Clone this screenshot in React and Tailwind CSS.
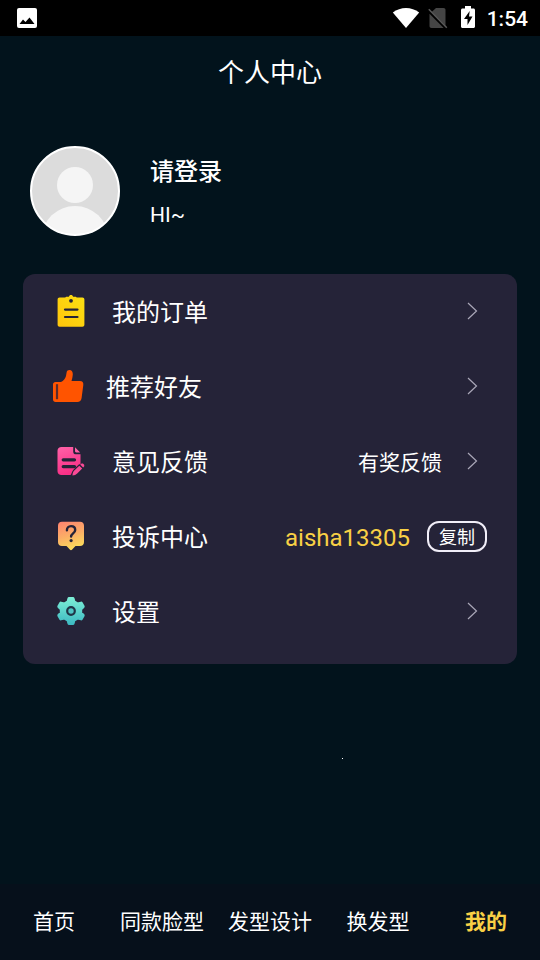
import React from "react";

function ClipboardIcon() {
  return (
    <svg className="mb-0.5 h-8 w-8" viewBox="0 0 32 32" aria-hidden="true">
      <defs>
        <linearGradient id="gold" x1="0" y1="1" x2="1" y2="0">
          <stop offset="0" stopColor="#ffc50c" />
          <stop offset="1" stopColor="#fbe012" />
        </linearGradient>
      </defs>
      <path
        fill="url(#gold)"
        d="M4.600 2.600H10c.4 0 .6-.9 1.300-.9h2.500C14.400.4 15.200 0 16 0s1.600.4 2.200 1.700h2.500c.7 0 .9.900 1.300.9h5.400c1.200 0 2 .8 2 2v25.200c0 1.200-.8 2-2 2H4.600c-1.200 0-2-.8-2-2V4.600c0-1.200.8-2 2-2Z"
      />
      <circle cx="16" cy="5.800" r="1.900" fill="#252338" />
      <path d="M10 14.600h12.500M10 22h12.500" stroke="#252338" strokeWidth="2.200" strokeLinecap="round" />
    </svg>
  );
}

function ThumbIcon() {
  return (
    <svg className="mb-0.5 h-8 w-8" viewBox="0 0 32 32" aria-hidden="true">
      <path
        fill="#ff5400"
        d="M2.500 12H8c2.500-1 4.400-3.500 5-6l.6-3.600C13.900.8 15 0 16.400 0c2.300 0 3.600 1.900 3.400 4.400-.1 2.200-.6 4.400-1.300 6.600h8.500c2.400 0 3.600 1.600 3.300 4l-1.700 13c-.4 2.500-1.800 4-4.300 4H2.500C1 32 0 31 0 29.500v-15C0 13 1 12 2.500 12Z"
      />
      <path d="M4 14.200v15" stroke="#5b2b2c" strokeWidth="2.200" />
    </svg>
  );
}

function NoteIcon() {
  return (
    <svg className="mb-0.5 h-8 w-8" viewBox="0 0 32 32" aria-hidden="true">
      <defs>
        <linearGradient id="pink" x1="0" y1="0" x2="0.300" y2="1">
          <stop offset="0" stopColor="#ff62a8" />
          <stop offset="1" stopColor="#fa2f86" />
        </linearGradient>
      </defs>
      <path
        fill="url(#pink)"
        d="M6.500 2h11.700v4.400c0 1.900 1 2.900 2.900 2.900H25.500v10L17 28l-1.500 2H6.500c-2.300 0-4-1.500-4-3.800V5.800C2.500 3.500 4.200 2 6.500 2Z"
      />
      <path fill="#ff62a8" d="M20 2.300 25.200 7.400h-3.800c-1 0-1.400-.5-1.400-1.400Z" />
      <path d="M8.200 14.800h11.300M8.200 21.600h11.300" stroke="#252338" strokeWidth="3.200" strokeLinecap="round" />
      <path
        fill="#fa4a96"
        stroke="#252338"
        strokeWidth="2.500"
        paintOrder="stroke"
        d="M17.500 30.500c0-2 .5-3.600 1.800-4.900l5-4.900 2.900 2.900-5 4.900c-1.300 1.300-2.700 2-4.700 2Z"
      />
      <path fill="#fa4a96" d="m25.300 19.700.7-.7c1.700-1.500 4.300 1 2.900 2.800l-.7.800Z" />
    </svg>
  );
}

function QuestionIcon() {
  return (
    <svg className="mb-0.5 h-8 w-8" viewBox="0 0 32 32" aria-hidden="true">
      <defs>
        <linearGradient id="peach" x1="0" y1="0" x2="0.300" y2="1">
          <stop offset="0" stopColor="#ff8270" />
          <stop offset="0.550" stopColor="#fbad66" />
          <stop offset="1" stopColor="#fbd85c" />
        </linearGradient>
      </defs>
      <path
        fill="url(#peach)"
        d="M7 1.700h18c2.500 0 4 1.500 4 4V22c0 2.500-1.500 4-4 4h-4.500l-3.300 3.600c-.8.800-1.600.8-2.400 0L11.500 26H7c-2.500 0-4-1.500-4-4V5.700c0-2.500 1.500-4 4-4Z"
      />
      <path
        d="M11.900 10.300c0-2.500 1.600-4.200 4.100-4.200s4.200 1.600 4.200 3.900c0 3.300-4.100 3.500-4.100 6.600"
        fill="none"
        stroke="#252338"
        strokeWidth="2.400"
        strokeLinecap="round"
      />
      <circle cx="16.100" cy="20.600" r="1.600" fill="#252338" />
    </svg>
  );
}

function GearIcon() {
  return (
    <svg className="mb-0.5 h-8 w-8" viewBox="0 0 32 32" aria-hidden="true">
      <defs>
        <linearGradient id="teal" gradientUnits="userSpaceOnUse" x1="0" y1="2" x2="0" y2="30">
          <stop offset="0" stopColor="#7eefd6" />
          <stop offset="1" stopColor="#3cb9c2" />
        </linearGradient>
      </defs>
      <path
        fill="url(#teal)"
        stroke="url(#teal)"
        strokeWidth="3"
        strokeLinejoin="round"
        d="M14 3.500h4l1 3.400 3.600 2.100 3.600-.9 2 3.500-2.500 2.500v3.800l2.500 2.500-2 3.500-3.600-.9-3.600 2.100-1 3.400h-4l-1-3.400L9.400 23l-3.600.9-2-3.500 2.500-2.500v-3.800l-2.500-2.500 2-3.500 3.600.9L13 6.900Z"
      />
      <circle cx="16" cy="16" r="3.800" fill="#4fc4c4" stroke="#203547" strokeWidth="2.200" />
    </svg>
  );
}

function Chevron() {
  return (
    <svg className="mr-[9px] mb-0.5 h-5 w-3 shrink-0" viewBox="0 0 12 20" fill="none" aria-hidden="true">
      <path d="m2 2 8.500 8L2 18" stroke="#aaa7b8" strokeWidth="1.200" />
    </svg>
  );
}

const items = [
  { label: "我的订单", Icon: ClipboardIcon },
  { label: "推荐好友", Icon: ThumbIcon, wide: true },
  { label: "意见反馈", Icon: NoteIcon, note: "有奖反馈" },
  { label: "投诉中心", Icon: QuestionIcon, account: "aisha13305" },
  { label: "设置", Icon: GearIcon },
];

const tabs = ["首页", "同款脸型", "发型设计", "换发型", "我的"];

function StatusBar() {
  return (
    <div className="flex h-9 items-center justify-between bg-black pr-3 pl-[17px] text-white">
      <svg className="h-5 w-5" viewBox="0 0 20 20" aria-hidden="true">
        <rect width="20" height="20" rx="2" fill="#fff" />
        <path d="m2.500 16 3.500-4.500 2.500 2.500 4-4.500 5 6.500Z" fill="#000" />
      </svg>
      <div className="flex items-center">
        <svg className="h-5 w-7" viewBox="0 0 28 20" aria-hidden="true">
          <path d="M.8 4.500C8.500-1.500 19.500-1.500 27.200 4.500L14 20Z" fill="#fff" />
        </svg>
        <svg className="ml-2 h-[22px] w-5" viewBox="0 0 20 22" aria-hidden="true">
          <path d="M8 1h7.500c1.200 0 2 .8 2 2v16c0 1.200-.8 2-2 2h-12c-1.200 0-2-.8-2-2V7Z" fill="#454545" />
          <path d="m0 3.200 18 18" stroke="#000" strokeWidth="3" />
          <path d="m.8 2.200 18 18.500" stroke="#5a5a5a" strokeWidth="1.500" />
        </svg>
        <svg className="mb-0.5 ml-3 h-[22px] w-4" viewBox="0 0 16 22" aria-hidden="true">
          <path d="M5 0h6v2.500h2.500c.8 0 1.500.7 1.500 1.500v16.500c0 .8-.7 1.500-1.500 1.500h-11c-.8 0-1.500-.7-1.500-1.500V4c0-.8.700-1.500 1.500-1.500H5Z" fill="#fff" />
          <path d="M9.700 5 4 13h3.500v6L12.500 10.500H9Z" fill="#000" />
        </svg>
        <span className="ml-[11px] pt-0.5 text-[21px] leading-6 font-medium">1:54</span>
      </div>
    </div>
  );
}

function MenuRow({ label, Icon, wide, note, account }) {
  const lead = (
    <span className={wide ? "flex flex-1 items-center gap-[21px] pl-[30px]" : "flex flex-1 items-center gap-[25px] pl-8"}>
      <Icon />
      <span className="pt-0.5 text-2xl">{label}</span>
    </span>
  );
  if (account) {
    return (
      <li className="flex h-[75px] items-center pr-[30px]">
        {lead}
        <span className="pt-0.5 text-2xl text-[#f8d045]">{account}</span>
        <button
          type="button"
          className="ml-[17px] h-[31px] w-[60px] rounded-xl border-2 border-[#f1eef8] pt-0.5 text-lg leading-6"
        >
          复制
        </button>
      </li>
    );
  }
  return (
    <li>
      <button type="button" className="flex h-[75px] w-full items-center pr-[30px] text-left">
        {lead}
        {note && <span className="mr-6 pt-1 text-[21px]">{note}</span>}
        <Chevron />
      </button>
    </li>
  );
}

export default function App() {
  return (
    <div className="relative flex min-h-screen flex-col bg-[#02131c] font-[Roboto,'Noto_Sans_CJK_SC',sans-serif] text-white">
      <StatusBar />
      <header className="flex h-[74px] items-center justify-center">
        <h1 className="text-[26px] leading-8">个人中心</h1>
      </header>

      <main className="flex-1">
        <section className="flex items-center gap-[30px] px-[30px] pt-9">
          <svg className="h-[90px] w-[90px]" viewBox="0 0 90 90" role="img" aria-label="头像">
            <defs>
              <clipPath id="face">
                <circle cx="45" cy="45" r="44" />
              </clipPath>
            </defs>
            <circle cx="45" cy="45" r="44" fill="#dcdcdc" />
            <g clipPath="url(#face)" fill="#f5f5f5">
              <circle cx="45" cy="39" r="18" />
              <ellipse cx="45" cy="92" rx="33" ry="32" />
            </g>
            <circle cx="45" cy="45" r="44" fill="none" stroke="#fff" strokeWidth="2" />
          </svg>
          <div className="pt-[5px]">
            <p className="text-2xl leading-9 font-medium">请登录</p>
            <p className="mt-[7px] text-[21px] leading-9">HI~</p>
          </div>
        </section>

        <ul className="mx-[23px] mt-[38px] rounded-xl bg-[#252338] pb-[15px]">
          {items.map((item) => (
            <MenuRow key={item.label} {...item} />
          ))}
        </ul>
      </main>

      <span className="absolute top-[758px] left-[342px] h-px w-px bg-white" />

      <nav className="grid h-[76px] grid-cols-5 bg-[#06101b]">
        {tabs.map((tab) => (
          <a
            key={tab}
            href="#"
            aria-current={tab === "我的" ? "page" : undefined}
            className="flex items-center justify-center pt-0.5 text-[21px] whitespace-nowrap aria-[current=page]:font-bold aria-[current=page]:text-[#f8d045]"
          >
            {tab}
          </a>
        ))}
      </nav>
    </div>
  );
}
